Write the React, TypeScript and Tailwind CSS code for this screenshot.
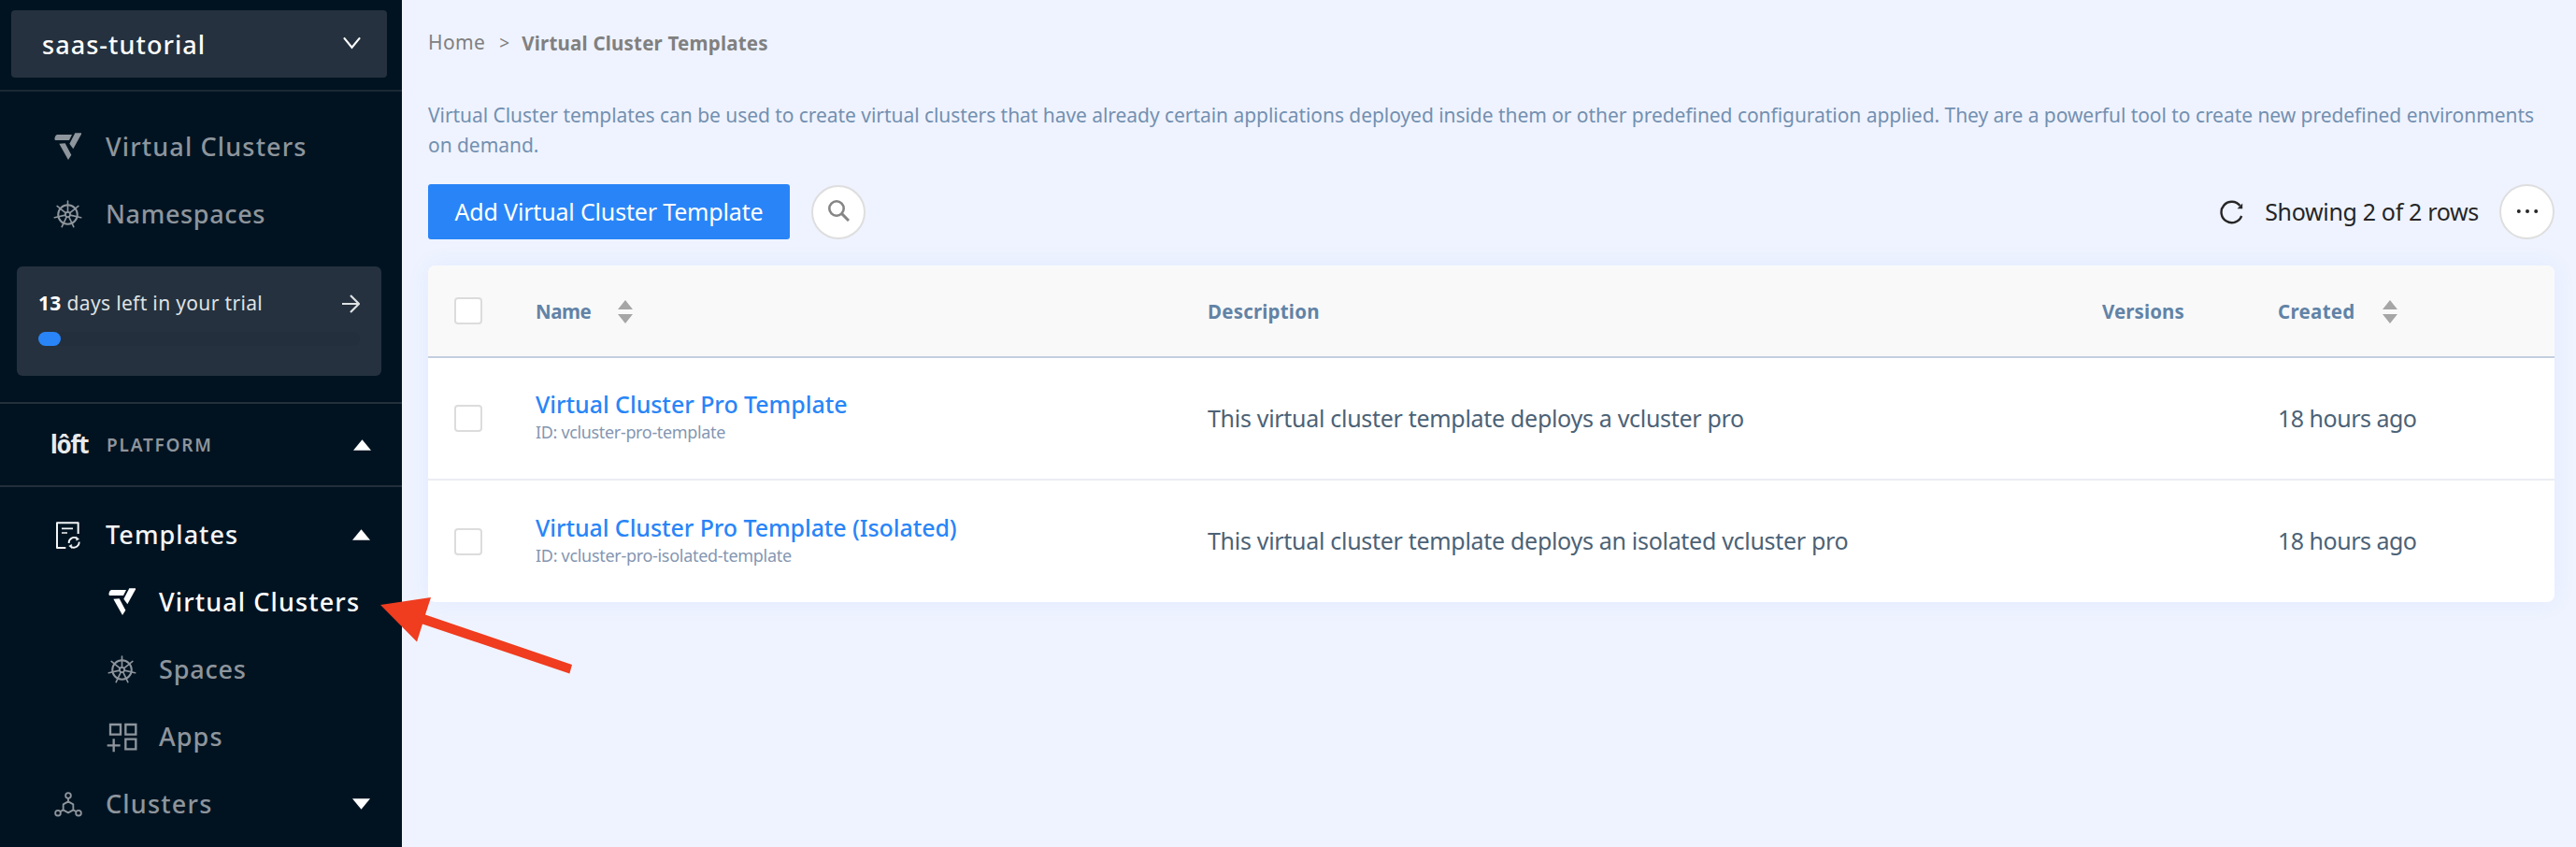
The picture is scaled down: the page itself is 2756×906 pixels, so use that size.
import type { ReactNode } from 'react';

interface NavItemProps {
  icon: ReactNode;
  label: string;
  className?: string;
  child?: boolean;
  arrow?: 'up' | 'down';
}

interface Template {
  name: string;
  nameClass: string;
  id: string;
  idClass: string;
  description: string;
  created: string;
}

const templates: Template[] = [
  {
    name: 'Virtual Cluster Pro Template',
    nameClass: 'tracking-[-0.05px]',
    id: 'vcluster-pro-template',
    idClass: 'tracking-[-0.34px]',
    description: 'This virtual cluster template deploys a vcluster pro',
    created: '18 hours ago',
  },
  {
    name: 'Virtual Cluster Pro Template (Isolated)',
    nameClass: 'tracking-[-0.08px]',
    id: 'vcluster-pro-isolated-template',
    idClass: 'tracking-[-0.3px]',
    description: 'This virtual cluster template deploys an isolated vcluster pro',
    created: '18 hours ago',
  },
];

const tableGrid = 'grid grid-cols-[115px_719px_957px_188px_1fr] items-center';

function VClusterIcon() {
  return (
    <svg className="w-[30px] h-[30px] -ml-0.5" viewBox="0 0 90 90" fill="currentColor">
      <path d="M12 6H60L51 24H6Q3 21 5 15Q7 8 12 6Z" />
      <path d="M70 1H92L64 52L52 35Z" />
      <path d="M19 35L38 34L58 71L48 87Z" />
    </svg>
  );
}

function HelmIcon() {
  return (
    <svg className="w-[31px] h-[31px]" viewBox="0 0 32 32" fill="none" stroke="currentColor">
      <circle cx="16" cy="16" r="10.6" strokeWidth="2.1" />
      <circle cx="16" cy="16" r="2.7" strokeWidth="1.8" />
      {[0, 1, 2, 3, 4, 5, 6].map((i) => (
        <path key={i} d="M16 13.2V1" strokeWidth="1.7" strokeLinecap="round" transform={`rotate(${(i * 360) / 7} 16 16)`} />
      ))}
    </svg>
  );
}

function TemplatesIcon() {
  return (
    <svg className="w-[28px] h-[31px]" viewBox="0 0 84 93" fill="none" stroke="currentColor" strokeWidth="6">
      <path d="M34 87H6V7H74V42" strokeLinejoin="round" />
      <path d="M21 25H57M21 39H39" strokeWidth="5" />
      <path d="M44 72A17 17 0 0 1 69 56M77 68A17 17 0 0 1 52 84" strokeWidth="5.5" />
      <path d="M67 51L77 59L68 64ZM54 89L44 81L53 76Z" fill="currentColor" strokeWidth="1" />
    </svg>
  );
}

function AppsIcon() {
  return (
    <svg className="w-[33px] h-[33px]" viewBox="0 0 99 99" fill="none" stroke="currentColor" strokeWidth="7">
      <path d="M12 9H45V41H12ZM61 9H94V41H61ZM61 56H94V88H61ZM2 76H44M23 55V97" />
    </svg>
  );
}

function ClustersIcon() {
  return (
    <svg className="w-[30px] h-[27px]" viewBox="0 0 90 81" fill="none" stroke="currentColor" strokeWidth="5.5">
      <path d="M45 31L61 40V58L45 67L29 58V40Z" strokeLinejoin="round" />
      <path d="M45 21V31M29 58L20 63M61 58L70 63" />
      <circle cx="45" cy="12" r="8.5" />
      <circle cx="12" cy="68" r="8.5" />
      <circle cx="78" cy="68" r="8.5" />
    </svg>
  );
}

function Caret({ down = false }: { down?: boolean }) {
  return (
    <svg className="w-[19px] h-3 text-white" viewBox="0 0 20 12" fill="currentColor">
      <path d={down ? 'M0 0H20L10 12Z' : 'M0 12L10 0L20 12Z'} />
    </svg>
  );
}

function NavItem({ icon, label, className = '', child, arrow }: NavItemProps) {
  return (
    <li className={`flex items-center h-[72px] pr-[34px] text-[27px] font-medium ${child ? 'pl-[113px]' : 'pl-[55px]'} ${className}`}>
      <span className="w-[35px] flex justify-center">{icon}</span>
      <span className={`flex-1 whitespace-nowrap ${child ? 'pl-[22px]' : 'pl-[23px]'}`}>{label}</span>
      {arrow && <Caret down={arrow === 'down'} />}
    </li>
  );
}

function Sidebar() {
  return (
    <aside className="w-[430px] shrink-0 flex flex-col bg-[#011321] text-[#8e959c]">
      <div className="pt-[11px] pl-3 pb-[13px] pr-4 border-b-2 border-[#1c2935]">
        <button className="flex w-full items-center justify-between h-[72px] rounded pl-[33px] pr-7 bg-[#25313e] text-white">
          <span className="pt-0.5 text-[27px] font-medium tracking-[1.06px]">saas-tutorial</span>
          <svg className="w-[19px] h-[14px] -mt-0.5" viewBox="0 0 20 14" fill="none" stroke="currentColor" strokeWidth="2.2">
            <path d="M1 1L10 12L19 1" />
          </svg>
        </button>
      </div>

      <ul className="pt-[23px]">
        <NavItem icon={<VClusterIcon />} label="Virtual Clusters" className="tracking-[1.15px]" />
        <NavItem icon={<HelmIcon />} label="Namespaces" className="tracking-[0.65px]" />
      </ul>

      {/* Trial status */}
      <div className="mt-[20px] mb-7 ml-[18px] mr-[22px] h-[117px] rounded-md bg-[#25313e] pt-6 pl-[23px] pr-[23px] text-[#dfe2e5]">
        <div className="flex items-center justify-between h-8">
          <p className="text-[21px] tracking-[0.34px]">
            <b className="text-white">13</b> days left in your trial
          </p>
          <svg className="w-[19px] h-5" viewBox="0 0 19 20" fill="none" stroke="currentColor" strokeWidth="2.2">
            <path d="M0 10H17M9 1L18 10L9 19" />
          </svg>
        </div>
        <div className="mt-[14px] h-[15px] rounded-full bg-[#232f3d]">
          <div className="w-6 h-full rounded-full bg-[#2985f7]" />
        </div>
      </div>

      <div className="flex items-center h-[91px] pl-[54px] pr-[33px] border-y-2 border-[#232f3a]">
        <span className="w-[60px] text-[26px] font-bold tracking-[-1.3px] text-[#e8eaec]">lôft</span>
        <span className="flex-1 pt-0.5 text-[19px] font-semibold tracking-[1.8px]">PLATFORM</span>
        <Caret />
      </div>

      <ul className="pt-[15px]">
        <NavItem icon={<TemplatesIcon />} label="Templates" className="text-[#f4f5f6] tracking-[1.05px]" arrow="up" />
        <NavItem icon={<VClusterIcon />} label="Virtual Clusters" className="text-white tracking-[1.12px]" child />
        <NavItem icon={<HelmIcon />} label="Spaces" className="tracking-[0.8px]" child />
        <NavItem icon={<AppsIcon />} label="Apps" className="tracking-[1.1px]" child />
        <NavItem icon={<ClustersIcon />} label="Clusters" className="tracking-[1.2px]" arrow="down" />
      </ul>
    </aside>
  );
}

function Checkbox() {
  return <span className="block ml-7 w-[30px] h-[29px] rounded border-2 border-[#dcdcdc] bg-white" />;
}

function Sorter() {
  return (
    <svg className="w-4 h-[25px]" viewBox="0 0 16 25" fill="#a6a6a6">
      <path d="M0 10L8 0L16 10ZM0 15H16L8 25Z" />
    </svg>
  );
}

function TemplatesTable() {
  return (
    <section className="mt-7 rounded-lg overflow-hidden bg-white shadow-[0_0_24px_rgba(60,140,255,0.08)]">
      <header className={`${tableGrid} h-[99px] bg-[#f9f9f9] border-b-2 border-[#c3cee0] text-[20.5px] font-bold text-[#6283a6]`}>
        <Checkbox />
        <span className="flex items-center gap-[29px] pt-px"><span className="tracking-[-0.5px]">Name</span><Sorter /></span>
        <span className="pt-px tracking-[0.2px]">Description</span>
        <span className="pt-px tracking-[0.09px]">Versions</span>
        <span className="flex items-center gap-[29px] pt-px"><span className="tracking-[0.3px]">Created</span><Sorter /></span>
      </header>
      {templates.map((t) => (
        <div key={t.id} className={`${tableGrid} h-[131px] border-b-2 border-[#ebedf3] last:border-0 last:h-[130px] text-[25px] text-[#4c6276]`}>
          <Checkbox />
          <div className="pb-[5px]">
            <a className={`block leading-[34px] font-medium text-[#2985f7] ${t.nameClass}`}>{t.name}</a>
            <p className={`leading-[26px] text-[18px] text-[#8496b1] ${t.idClass}`}>ID: {t.id}</p>
          </div>
          <span className="tracking-[-0.3px]">{t.description}</span>
          <span />
          <span className="tracking-[-0.5px]">{t.created}</span>
        </div>
      ))}
    </section>
  );
}

export default function App() {
  return (
    <div className="relative flex w-[2756px] h-[906px] overflow-hidden bg-[#eff3ff] font-['Noto_Sans',sans-serif]">
      <Sidebar />

      <main className="flex-1 pl-7 pr-[23px] pt-[30px]">
        <nav className="flex h-8 items-center text-[#808080]">
          <span className="text-[21px] tracking-[0.37px]">Home</span>
          <span className="w-[39px] pl-0.5 text-center text-[19px]">&gt;</span>
          <span className="text-[20.5px] font-bold tracking-[0.2px]">Virtual Cluster Templates</span>
        </nav>

        <p className="mt-[46px] w-[2264px] h-[89px] text-[21px] leading-[31.7px] tracking-[-0.049px] text-[#7390b0]">
          Virtual Cluster templates can be used to create virtual clusters that have already certain applications deployed inside them or other predefined configuration applied. They are a powerful tool to create new predefined environments on demand.
        </p>

        <div className="flex items-center h-[59px]">
          <button className="w-[387px] h-[59px] rounded-[3px] bg-[#2985f7] text-white text-[25px] tracking-[-0.17px]">
            Add Virtual Cluster Template
          </button>
          <button className="ml-[23px] flex items-center justify-center w-[58px] h-[58px] rounded-full border-2 border-[#dedede] bg-white" aria-label="Search">
            <svg className="w-[23px] h-[23px] -mt-0.5" viewBox="0 0 23 23" fill="none" stroke="#858585" strokeWidth="2.6">
              <circle cx="9" cy="9" r="7.7" />
              <path d="M14.4 14.4L22 22" strokeWidth="3" />
            </svg>
          </button>
          <div className="ml-auto flex items-center text-[#262626]">
            <svg className="w-[26px] h-[26px]" viewBox="0 0 26 26" fill="none" stroke="currentColor" strokeWidth="2.4">
              <path d="M23.2 17A11.2 11.2 0 1 1 21.5 6" />
              <path d="M24.2 3.6V9.2H18.6Z" fill="currentColor" stroke="none" />
            </svg>
            <span className="ml-[22px] text-[25px] tracking-[-0.33px]">Showing 2 of 2 rows</span>
            <button className="ml-[22px] flex items-center justify-center w-[59px] h-[59px] rounded-full border-2 border-[#dedede] bg-white" aria-label="More">
              <svg className="w-6 h-1 -mt-px" viewBox="0 0 24 4" fill="currentColor">
                <circle cx="2.8" cy="2" r="2" />
                <circle cx="12" cy="2" r="2" />
                <circle cx="21.2" cy="2" r="2" />
              </svg>
            </button>
          </div>
        </div>

        <TemplatesTable />
      </main>

      {/* Callout arrow */}
      <svg className="absolute left-[400px] top-[630px] w-[220px] h-[100px]" viewBox="400 630 220 100" fill="#f03c1f">
        <path d="M407 647L461 639L455 657.5L612 711L609.4 720.5L452 667.5L446 686.5Z" />
      </svg>
    </div>
  );
}
